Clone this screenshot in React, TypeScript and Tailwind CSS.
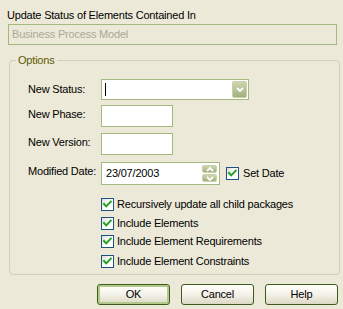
import React from 'react';

function Check() {
    return (
        <span className="relative flex h-[13px] w-[13px] shrink-0 items-center justify-center border border-[#1C5180] bg-gradient-to-br from-[#DCDCD6] via-white to-white">
            <svg width="11" height="11" viewBox="0 0 11 11">
                <path d="M2 5 L4.2 7.4 L8.8 2.6" fill="none" stroke="#21A121" strokeWidth="2" strokeLinecap="square" />
            </svg>
        </span>
    );
}

function CheckRow({ label, className }: { label: string; className: string }) {
    return (
        <div className={`flex h-[13px] items-center ${className}`}>
            <Check />
            <span className="ml-[3px] leading-[13px]">{label}</span>
        </div>
    );
}

function OliveButton({ children, className }: { children: React.ReactNode; className: string }) {
    return (
        <div className={`flex items-center justify-center rounded-[2px] border border-[#C7D0A8] bg-gradient-to-b from-[#CDD6B0] to-[#A3B07E] ${className}`}>
            {children}
        </div>
    );
}

function Chevron({ up }: { up?: boolean }) {
    return (
        <svg width="8" height="5" viewBox="0 0 8 5">
            <path d={up ? 'M1 4 L4 1 L7 4' : 'M1 1 L4 4 L7 1'} fill="none" stroke="white" strokeWidth="1.8" />
        </svg>
    );
}

function Button({ label, primary }: { label: string; primary?: boolean }) {
    return (
        <button
            className={`flex h-[21px] w-[73px] items-center justify-center rounded-[3px] border border-[#3D5A1F] bg-gradient-to-b from-[#FFFFFB] via-[#F4F2E8] to-[#DCD8C4] text-[11px] text-black ${
                primary ? 'shadow-[inset_0_0_0_2px_#B3C98C]' : ''
            }`}
        >
            {label}
        </button>
    );
}

export default function App() {
    return (
        <div className="h-[309px] w-[343px] overflow-hidden bg-[#ECE9D8] text-[11px] leading-[13px] tracking-[-0.2px] text-black" style={{ fontFamily: '"Liberation Sans", Arial, sans-serif' }}>
            <div className="ml-[7px] pt-[9px]">Update Status of Elements Contained In</div>

            <div className="ml-[8px] mt-[2px] flex h-[21px] w-[329px] items-center border border-[#A4B97F] pl-[3px] text-[#ACA899]">
                Business Process Model
            </div>

            <fieldset className="ml-[9px] mt-[9px] w-[331px] rounded-[4px] border border-[#D0D0BF] pb-[6px]">
                <legend className="ml-[6px] px-[2px] leading-[13px] text-[#5C5A00]">Options</legend>

                <div className="pl-[18px]">
                    <div className="mt-[12px] flex h-[21px] items-center">
                        <span className="w-[73px] pb-[1px]">New Status:</span>
                        <div className="flex h-[21px] w-[148px] items-center border border-[#A4B97F] bg-white pl-[3px] pr-[1px]">
                            <span className="h-[13px] w-px bg-black" />
                            <OliveButton className="ml-auto h-[17px] w-[15px]">
                                <Chevron />
                            </OliveButton>
                        </div>
                    </div>

                    <div className="mt-[5px] flex h-[22px] items-center">
                        <span className="w-[73px] pb-[4px]">New Phase:</span>
                        <div className="h-[22px] w-[72px] border border-[#A4B97F] bg-white" />
                    </div>

                    <div className="mt-[6px] flex h-[22px] items-center">
                        <span className="w-[73px] pb-[4px]">New Version:</span>
                        <div className="h-[22px] w-[72px] border border-[#A4B97F] bg-white" />
                    </div>

                    <div className="mt-[7px] flex h-[23px] items-center">
                        <span className="w-[73px] pb-[4px]">Modified Date:</span>
                        <div className="flex h-[23px] w-[119px] items-center border border-[#A4B97F] bg-white pl-[4px] pr-[2px]">
                            <span>23/07/2003</span>
                            <div className="ml-auto flex flex-col gap-[1px]">
                                <OliveButton className="h-[8px] w-[15px]">
                                    <Chevron up />
                                </OliveButton>
                                <OliveButton className="h-[8px] w-[15px]">
                                    <Chevron />
                                </OliveButton>
                            </div>
                        </div>
                        <div className="ml-[6px] flex items-center">
                            <Check />
                            <span className="ml-[4px]">Set Date</span>
                        </div>
                    </div>

                    <div className="pl-[73px]">
                        <CheckRow className="mt-[13px]" label="Recursively update all child packages" />
                        <CheckRow className="mt-[6px]" label="Include Elements" />
                        <CheckRow className="mt-[5px]" label="Include Element Requirements" />
                        <CheckRow className="mt-[7px]" label="Include Element Constraints" />
                    </div>
                </div>
            </fieldset>

            <div className="ml-[97px] mt-[9px] flex gap-[11px]">
                <Button label="OK" primary />
                <Button label="Cancel" />
                <Button label="Help" />
            </div>
        </div>
    );
}
